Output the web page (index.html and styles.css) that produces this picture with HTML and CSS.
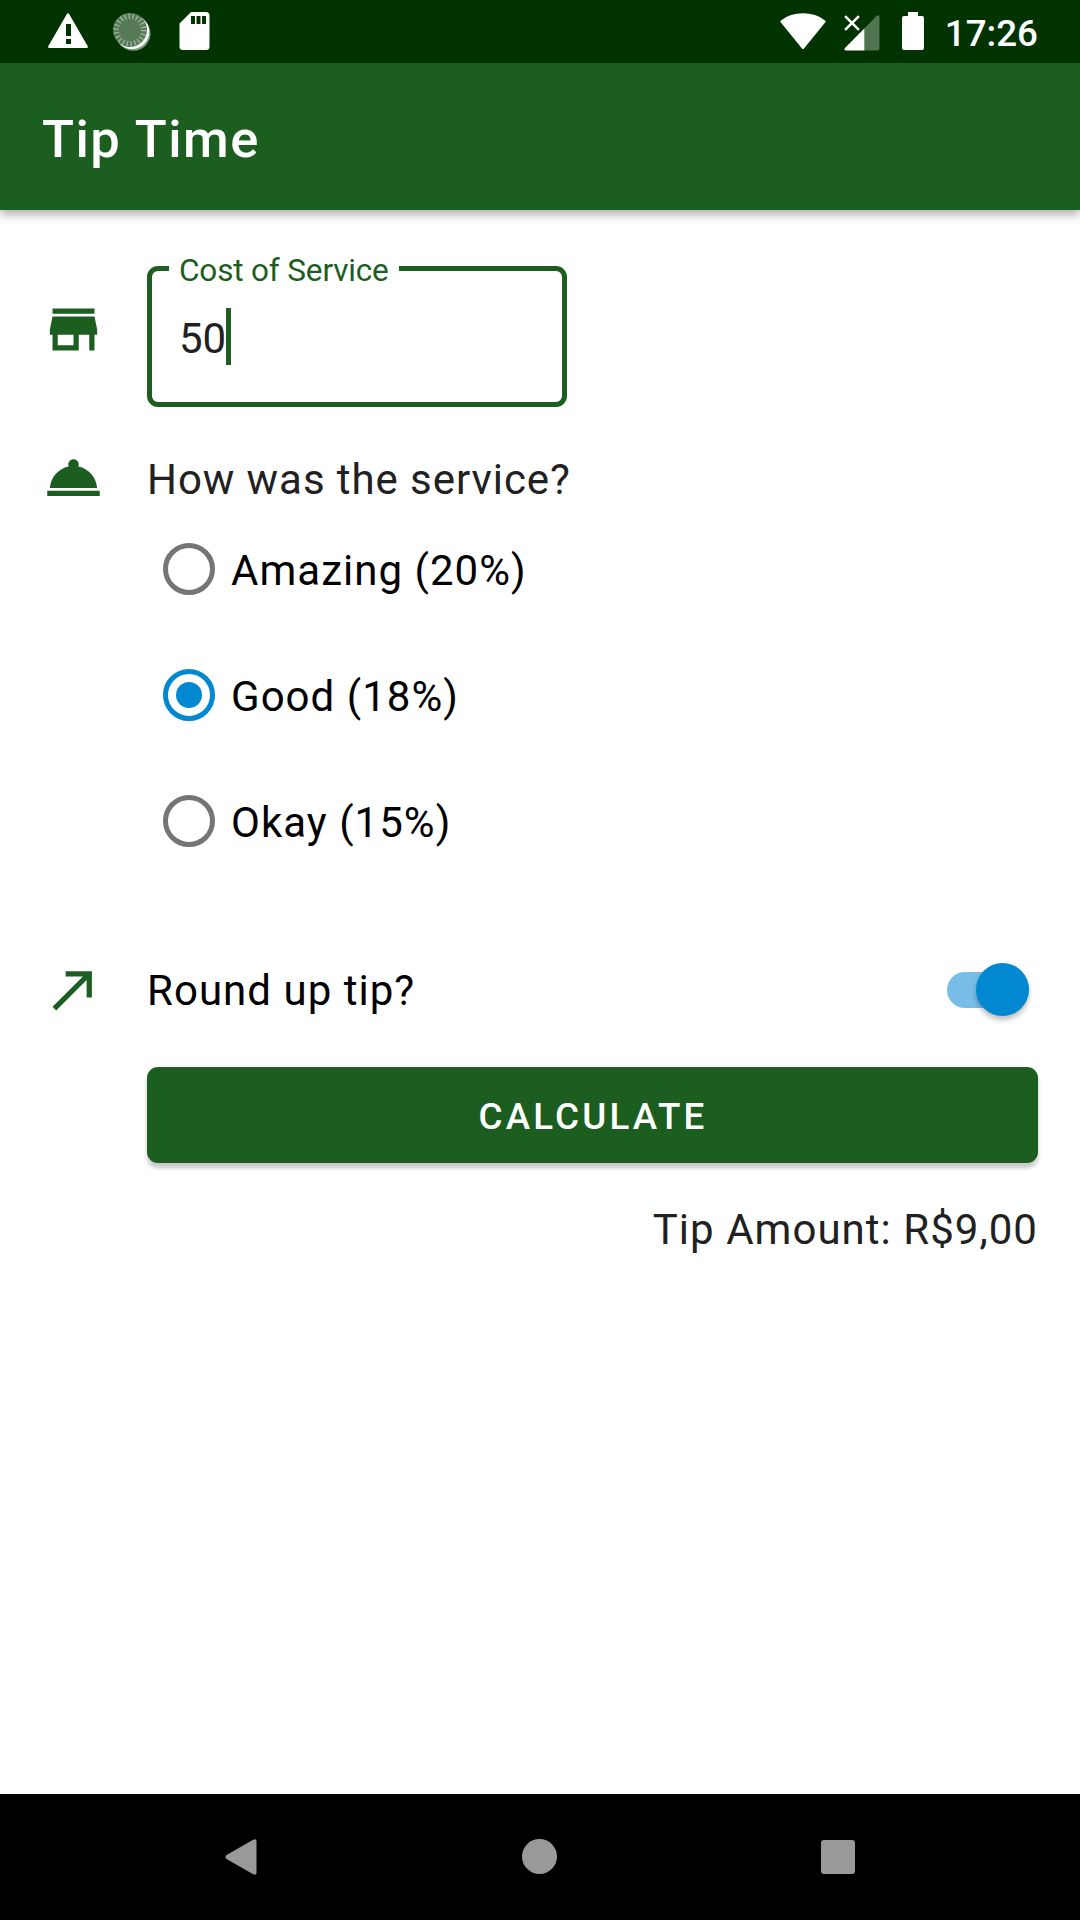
FILE: index.html
```html
<!DOCTYPE html>
<html lang="en">
<head>
<meta charset="utf-8">
<title>Tip Time</title>
<link rel="stylesheet" href="styles.css">
</head>
<body>
<div class="screen">
  <header class="status">
    <div class="status-left">
      <svg width="40" height="36" viewBox="0 0 40 36"><path fill="#fff" fill-rule="evenodd" d="M18.7 1.2Q20 -.7 21.300 1.200L39.600 33Q40.600 35 38.500 35H1.500Q-.6 35 .4 33zM18 11v12h5V11zM18 26v5h5v-5z"/></svg>
      <svg width="38" height="38" viewBox="0 0 38 38">
        <circle cx="20.300" cy="20.500" r="17.200" fill="#7f997f"/>
        <circle cx="19" cy="18.800" r="17.200" fill="#fff"/>
        <circle cx="17" cy="17" r="17" fill="#567a56"/>
        <circle cx="17" cy="17" r="13.800" fill="none" stroke="#9db39d" stroke-width="5.500" stroke-dasharray="1.340 2.602"/>
      </svg>
      <svg width="31" height="38" viewBox="0 0 31 38"><path fill="#fff" fill-rule="evenodd" d="M12 0h15q3.500 0 3.500 3.500v31q0 3.500-3.500 3.500H4Q.5 38 .5 34.500V11.500zM12 4v8h4V4zM17.500 4v8h4V4zM23 4v8h4V4z"/></svg>
    </div>
    <div class="status-right">
      <svg width="46" height="37" viewBox="0 0 46 37"><path fill="#fff" d="M.7 9.200Q-.1 8.200 1 7.400Q10 .3 23 .3T45 7.400Q46.100 8.200 45.300 9.200L24 35.500Q23 36.700 22 35.500z"/></svg>
      <svg width="36" height="36" viewBox="0 0 36 36"><path fill="#4f744f" d="M20 13.800L32.200 1.200Q35.500-1 35.500 2.500V33q0 2.500-2.500 2.500H20z"/><path fill="#fff" d="M20.300 13.500V35.500H2Q-.8 35 1 33zM.2 2L2 .2 8 6.200 14 .2 15.800 2 9.800 8l6 6L14 15.800 8 9.800 2 15.800 .2 14l6-6z"/></svg>
      <svg width="22" height="38" viewBox="0 0 22 38"><path fill="#fff" d="M6 0h10v4h4q2 0 2 2v30q0 2-2 2H2q-2 0-2-2V6q0-2 2-2h4z"/></svg>
      <span class="clock">17:26</span>
    </div>
  </header>
  <div class="appbar"><h1 class="title">Tip Time</h1></div>
  <main class="content">
    <section class="row cost">
      <svg class="icon" viewBox="0 0 24 24"><path d="M20 4H4v2h16V4zm1 10v-2l-1-5H4l-1 5v2h1v6h10v-6h4v6h2v-6h1zm-9 4H6v-4h6v4z"/></svg>
      <div class="field">
        <span class="field-label">Cost of Service</span>
        <span class="field-value">50</span><span class="caret"></span>
      </div>
    </section>
    <section class="row question">
      <svg class="icon" viewBox="0 0 24 24"><path d="M2 17h20v2H2zm11.840-9.210c.1-.24.16-.51.16-.79 0-1.100-.9-2-2-2s-2 .9-2 2c0 .28.06.55.16.79C6.250 8.600 3.270 11.930 3 16h18c-.27-4.070-3.250-7.400-7.160-8.210z"/></svg>
      <span class="text soft">How was the service?</span>
    </section>
    <div class="options">
      <div class="option"><span class="radio"></span><span class="text">Amazing (20%)</span></div>
      <div class="option"><span class="radio checked"></span><span class="text">Good (18%)</span></div>
      <div class="option"><span class="radio"></span><span class="text">Okay (15%)</span></div>
    </div>
    <section class="row round">
      <svg class="icon" viewBox="0 0 24 24"><path d="M9 5v2h6.590L4 18.590 5.410 20 17 8.410V15h2V5z"/></svg>
      <span class="text">Round up tip?</span>
      <span class="switch"><span class="thumb"></span></span>
    </section>
    <div class="button">CALCULATE</div>
    <div class="text soft result">Tip Amount: R$9,00</div>
  </main>
  <nav class="navbar">
    <svg width="32" height="36" viewBox="0 0 32 36"><path fill="#999" d="M28.200 .7Q31.500-.8 31.500 2.500v31q0 3.300-3.300 1.800L1.500 20Q-.8 18 1.500 16z"/></svg>
    <span class="home"></span>
    <span class="recent"></span>
  </nav>
</div>
</body>
</html>
```
FILE: styles.css
```css
* { box-sizing: border-box; }
body { margin: 0; font-family: Roboto, sans-serif; }
svg { display: block; flex: none; }
.screen {
  width: 1080px;
  height: 1920px;
  display: flex;
  flex-direction: column;
  background: #fff;
  overflow: hidden;
}
.status {
  height: 63px;
  flex: none;
  display: flex;
  justify-content: space-between;
  padding: 12px 42px 0 48px;
  background: #003300;
}
.status-left, .status-right { display: flex; align-items: flex-start; }
.status-left { gap: 25px; }
.status-left svg:nth-child(1) { margin-top: 1px; }
.status-left svg:nth-child(2) { margin: 1px 3px 0 0; }
.status-right svg:nth-child(1) { margin: 1px 18px 0 0; }
.status-right svg:nth-child(2) { margin: 3px 22px 0 0; }
.status-right svg:nth-child(3) { margin-right: 21px; }
.clock { margin-top: 1px; font-size: 36.750px; line-height: 42px; font-weight: 500; color: #fff; }
.appbar {
  height: 147px;
  flex: none;
  display: flex;
  align-items: center;
  padding: 4px 42px 0;
  background: #1b5e20;
  box-shadow: 0 4px 10px rgba(0, 0, 0, .35);
}
.title { margin: 0; font-size: 52.500px; line-height: 62px; font-weight: 500; letter-spacing: 1.500px; color: #fff; }
.content {
  flex: 1;
  display: flex;
  flex-direction: column;
  padding: 56px 42px 0;
}
.row { display: flex; align-items: center; gap: 42px; }
.icon { width: 63px; height: 63px; fill: #1b5e20; }
.text { font-size: 42px; line-height: 56px; letter-spacing: 1.030px; color: #000; }
.soft { color: #212121; }
.cost { align-items: flex-start; }
.cost .icon { margin-top: 32px; }
.field {
  position: relative;
  width: 420px;
  height: 141px;
  display: flex;
  align-items: flex-start;
  padding: 37px 27px 0;
  border: 5px solid #1b5e20;
  border-radius: 11px;
}
.field-label {
  position: absolute;
  top: -19px;
  left: 17px;
  padding: 0 10px;
  background: #fff;
  font-size: 31.500px;
  line-height: 37px;
  letter-spacing: -.160px;
  white-space: nowrap;
  color: #1b5e20;
}
.field-value { font-size: 42px; line-height: 61px; color: #212121; }
.caret { width: 5px; height: 57px; background: #1b5e20; }
.question { margin-top: 39px; }
.question .text { margin-top: 4px; letter-spacing: .930px; }
.options { display: flex; flex-direction: column; padding-left: 121px; margin-top: -3px; }
.option { height: 126px; display: flex; align-items: center; gap: 16px; }
.option .text { margin-top: 4px; }
.radio {
  width: 52px;
  height: 52px;
  flex: none;
  display: flex;
  align-items: center;
  justify-content: center;
  border: 5px solid #757575;
  border-radius: 50%;
}
.checked { border-color: #0288d1; }
.checked::after { content: ""; width: 26px; height: 26px; border-radius: 50%; background: #0288d1; }
.round { margin-top: 74px; }
.round .text { margin-top: 3px; }
.switch {
  width: 82px;
  height: 36px;
  margin-left: auto;
  margin-right: 9px;
  display: flex;
  align-items: center;
  justify-content: flex-end;
  border-radius: 18px;
  background: #77bde7;
}
.thumb {
  width: 53px;
  height: 53px;
  flex: none;
  border-radius: 50%;
  background: #0288d1;
  box-shadow: 0 4px 5px rgba(0, 0, 0, .25);
}
.button {
  height: 96px;
  margin: 46px 0 0 105px;
  padding: 2px 0 0 1px;
  display: flex;
  align-items: center;
  justify-content: center;
  border-radius: 11px;
  background: #1b5e20;
  box-shadow: 0 5px 4px rgba(0, 0, 0, .22);
  color: #fff;
  font-size: 36.750px;
  font-weight: 500;
  letter-spacing: 3.150px;
}
.result { margin-top: 39px; text-align: right; }
.navbar {
  height: 126px;
  flex: none;
  display: flex;
  align-items: center;
  justify-content: space-between;
  padding: 0 225px 1px;
  background: #000;
}
.home { width: 35px; height: 35px; border-radius: 50%; background: #999; }
.recent { width: 34px; height: 34px; border-radius: 3px; background: #999; }
```
